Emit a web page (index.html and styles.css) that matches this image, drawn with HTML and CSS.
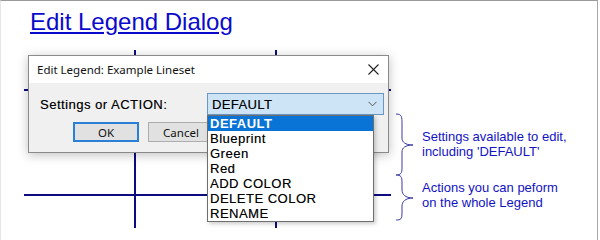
FILE: index.html
```html
<!doctype html>
<html>
<head>
  <title>Edit Legend Dialog</title>
  <meta charset='UTF-8'>
  <link rel="stylesheet" href="styles.css">
</head>
<body>
  <div class='page'>
    <h1><a href='#'>Edit Legend Dialog</a></h1>
    <div class='stage'>
      <div class='hline' style='top:44px'></div>
      <div class='hline' style='top:149px'></div>
      <div class='vline' style='left:133px'></div>
      <div class='vline' style='left:274px'></div>

      <div class='dialog'>
        <div class='titlebar'>
          <span>Edit Legend: Example Lineset</span>
          <svg class='close' width='11' height='11' viewBox='0 0 11 11'>
            <path d='M0.5 0.5 L10.5 10.5 M10.5 0.5 L0.5 10.5' stroke='#222' stroke-width='1.1' fill='none'/>
          </svg>
        </div>
        <div class='body'>
          <div class='row'>
            <span class='label'>Settings or ACTION:</span>
            <div class='combo'>
              <span>DEFAULT</span>
              <svg width='9' height='6' viewBox='0 0 9 6'>
                <path d='M0.5 0.8 L4.5 4.8 L8.5 0.8' stroke='#555' stroke-width='1' fill='none'/>
              </svg>
            </div>
          </div>
          <div class='buttons'>
            <button class='default'>OK</button>
            <button>Cancel</button>
          </div>
        </div>
      </div>

      <ul class='droplist'>
        <li class='selected'>DEFAULT</li>
        <li>Blueprint</li>
        <li>Green</li>
        <li>Red</li>
        <li>ADD COLOR</li>
        <li>DELETE COLOR</li>
        <li>RENAME</li>
      </ul>

      <svg class='braces' width='24' height='112' viewBox='0 0 24 112'>
        <path d='M3 2 C9 2 9 5 9 12 L9 26 C9 30 12 33 20 33 C12 33 9 36 9 40 L9 56 C9 61 8 63 3 63 C8 63 9 65 9 70 L9 78 C9 82 12 86 20 86 C12 86 9 90 9 94 L9 101 C9 107 8 108 3 108' stroke='#3a3aa8' stroke-width='1' fill='none'/>
      </svg>

      <div class='notes'>
        <p>Settings available to edit,<br>including 'DEFAULT'</p>
        <p>Actions you can peform<br>on the whole Legend</p>
      </div>
    </div>
  </div>
</body>
</html>
```

FILE: styles.css
```css
body {
  margin: 0;
  background: #fff;
  font-family: "Liberation Sans", Arial, sans-serif
}
.page {
  width: 596px;
  height: 239px;
  border-top: 1px solid #9a9a9a;
  border-left: 1px solid #e6e6e6;
  border-right: 1px solid #a8a8a8;
  overflow: hidden
}
h1 {
  margin: 0;
  padding: 7px 0 0 29px;
  font-size: 24px;
  font-weight: normal;
  line-height: 28px
}
h1 a { color: #0a0acc }
.stage {
  position: relative;
  margin-top: 9px;
  height: 194px
}
.hline {
  position: absolute;
  left: 23px;
  width: 367px;
  height: 2px;
  background: #0c0c80
}
.vline {
  position: absolute;
  top: 5px;
  width: 2px;
  height: 178px;
  background: #0c0c80
}
.dialog {
  position: absolute;
  left: 27px;
  top: 10px;
  width: 359px;
  height: 96px;
  border: 1px solid #8a8a8a;
  background: #f0f0f0;
  box-shadow: 0 2px 10px rgba(0,0,0,.25);
  display: flex;
  flex-direction: column
}
.titlebar {
  height: 27px;
  background: #fff;
  display: flex;
  align-items: center;
  justify-content: space-between;
  padding: 0 8px 0 8px;
  font-family: "Noto Sans", sans-serif;
  font-size: 11.5px;
  color: #111
}
.close { margin-right: 1px }
.body { padding: 10px 0 0 0 }
.row {
  display: flex;
  align-items: center;
  height: 22px
}
.label {
  margin-left: 11px;
  width: 167px;
  font-size: 13px;
  letter-spacing: .5px;
  color: #000;
  text-shadow: .3px 0 0 rgba(0,0,0,.45)
}
.combo {
  width: 165px;
  height: 20px;
  border: 1px solid #6b97c6;
  background: #cde4f7;
  display: flex;
  align-items: center;
  justify-content: space-between;
  padding: 0 6px 0 4px;
  box-sizing: content-box;
  font-size: 13px;
  letter-spacing: .4px;
  color: #000;
  text-shadow: .3px 0 0 rgba(0,0,0,.4)
}
.buttons {
  display: flex;
  gap: 9px;
  margin: 7px 0 0 44px
}
button {
  width: 66px;
  height: 20px;
  padding: 0;
  border: 1px solid #adadad;
  background: #e1e1e1;
  font-family: "Noto Sans", sans-serif;
  font-size: 11.5px;
  color: #111
}
button.default { border: 2px solid #2a7fd6 }
.droplist {
  position: absolute;
  left: 206px;
  top: 70px;
  width: 165px;
  margin: 0;
  padding: 0;
  list-style: none;
  background: #fff;
  border: 1px solid #6e6e6e;
  box-shadow: 2px 2px 4px rgba(0,0,0,.2)
}
.droplist li {
  height: 15px;
  line-height: 15px;
  padding-left: 2px;
  font-size: 13px;
  letter-spacing: .5px;
  color: #000;
  text-shadow: .3px 0 0 rgba(0,0,0,.45)
}
.droplist li.selected {
  background: #0a74d6;
  color: #fff;
  font-weight: bold;
  text-shadow: none
}
.braces {
  position: absolute;
  left: 392px;
  top: 67px
}
.notes {
  position: absolute;
  left: 421px;
  top: 84px;
  color: #1212c4;
  font-size: 13px;
  line-height: 15px
}
.notes p { margin: 0 0 21px 0 }
```
